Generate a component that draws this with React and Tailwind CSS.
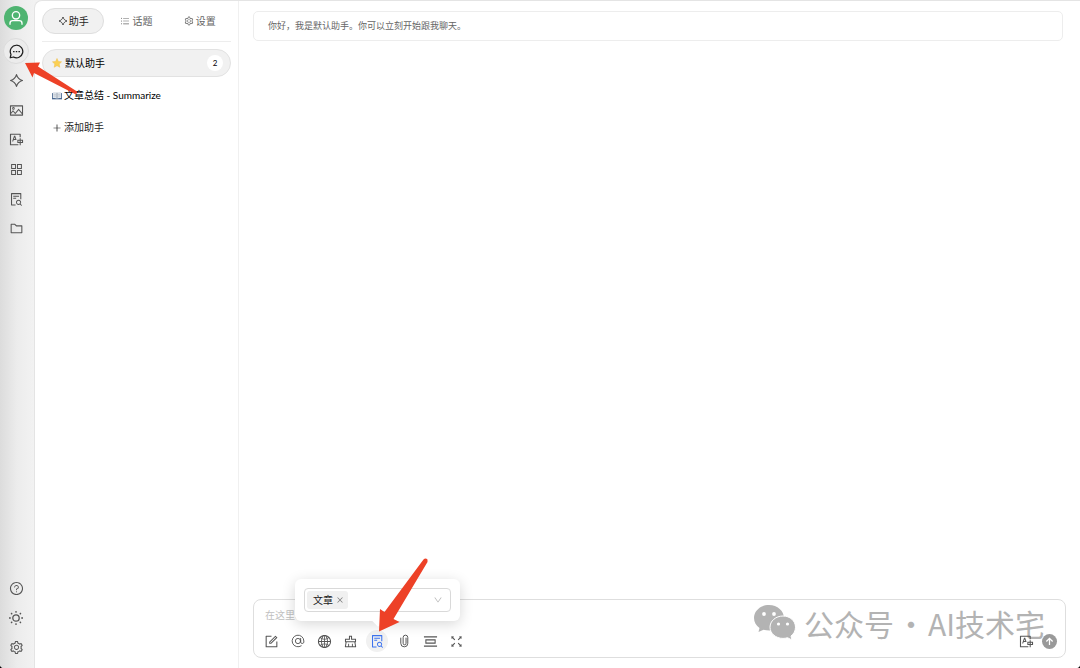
import {
  AiOutlineAppstore,
  AiOutlineClear,
  AiOutlineClose,
  AiOutlineDown,
  AiOutlineFileSearch,
  AiOutlineFolder,
  AiOutlineForm,
  AiOutlineFullscreen,
  AiOutlineGlobal,
  AiOutlinePicCenter,
  AiOutlinePicture,
  AiOutlinePlus,
  AiOutlineQuestionCircle,
  AiOutlineSetting,
  AiOutlineTranslation,
  AiOutlineUnorderedList,
} from "react-icons/ai";

const fontStack = "font-['Lato','Noto_Sans_CJK_SC',sans-serif]";

function Sparkle({ size = 14 }) {
  return (
    <svg width={size} height={size} viewBox="0 0 24 24" fill="none" stroke="currentColor" strokeWidth="1.9" strokeLinejoin="round">
      <path d="M12 2.500C13.500 7.500 16.500 10.500 21.500 12C16.500 13.500 13.500 16.500 12 21.500C10.500 16.500 7.500 13.500 2.500 12C7.500 10.500 10.500 7.500 12 2.500Z" />
    </svg>
  );
}

function ChatIcon() {
  return (
    <svg width="15" height="15" viewBox="0 0 24 24" fill="none" stroke="currentColor" strokeWidth="2" strokeLinejoin="round">
      <path d="M12 2A10 10 0 1 1 7.300 20.800L2 22L3.200 16.700A10 10 0 0 1 12 2Z" />
      <path d="M6.500 12h2.400M10.800 12h2.400M15.100 12h2.400" />
    </svg>
  );
}

function SunIcon() {
  return (
    <svg width="14" height="14" viewBox="0 0 24 24" fill="none" stroke="currentColor" strokeWidth="2.2">
      <circle cx="12" cy="12" r="5.5" />
      <path d="M12 0v3M12 21v3M0 12h3M21 12h3M3.500 3.500l2 2M18.500 18.500l2 2M3.500 20.500l2-2M18.500 5.500l2-2" />
    </svg>
  );
}

function AtIcon() {
  return (
    <svg width="14" height="14" viewBox="0 0 24 24" fill="none" stroke="currentColor" strokeWidth="1.6" strokeLinecap="round">
      <circle cx="12" cy="12" r="4.5" />
      <path d="M16.500 7.500v6.500a2.800 2.800 0 0 0 5.500 0v-2a10 10 0 1 0-4.500 8.400" />
    </svg>
  );
}

function ClipIcon() {
  return (
    <svg width="14" height="14" viewBox="0 0 24 24" fill="none" stroke="currentColor" strokeWidth="1.7" strokeLinecap="round">
      <path d="M15.500 7v9a2.500 2.500 0 0 1-5 0V6a4 4 0 0 1 8 0v10a5.500 5.500 0 0 1-12 0V7" />
    </svg>
  );
}

function Star() {
  return (
    <svg width="10" height="10" viewBox="0 0 24 24">
      <path d="M12 1l3.300 7.300 7.700.9-5.700 5.300 1.500 7.800L12 18.500l-6.800 3.800 1.500-7.800L1 9.200l7.700-.9z" fill="#fbd052" stroke="#eeb83c" />
    </svg>
  );
}

function Book() {
  return (
    <svg width="10" height="10" viewBox="0 0 24 24">
      <path d="M0 5h24v15H0z" fill="#4a6890" />
      <path d="M2 3q6-2 10 1v14q-5-2-10-1zM22 3q-6-2-10 1v14q5-2 10-1z" fill="#dfe5eb" />
      <path d="M12 4v14" stroke="#6d7d90" strokeWidth="1.5" />
      <path d="M4 8h6M4 12h6M14 8h6M14 12h6" stroke="#b3bcc6" strokeWidth="1.5" />
    </svg>
  );
}

const navItems = [
  { label: "智能体", icon: <Sparkle size={15} /> },
  { label: "绘画", icon: <AiOutlinePicture /> },
  { label: "翻译", icon: <AiOutlineTranslation /> },
  { label: "小程序", icon: <AiOutlineAppstore /> },
  { label: "知识库", icon: <AiOutlineFileSearch /> },
  { label: "文件", icon: <AiOutlineFolder /> },
];

const bottomItems = [
  { label: "帮助", icon: <AiOutlineQuestionCircle /> },
  { label: "主题", icon: <SunIcon /> },
  { label: "设置", icon: <AiOutlineSetting /> },
];

const tools = [
  { label: "新话题", icon: <AiOutlineForm /> },
  { label: "提及模型", icon: <AtIcon /> },
  { label: "联网搜索", icon: <AiOutlineGlobal /> },
  { label: "清空", icon: <AiOutlineClear /> },
  { label: "知识库", icon: <AiOutlineFileSearch />, active: true },
  { label: "附件", icon: <ClipIcon /> },
  { label: "清除上下文", icon: <AiOutlinePicCenter /> },
  { label: "展开", icon: <AiOutlineFullscreen /> },
];

function NavButton({ label, icon }) {
  return (
    <button aria-label={label} className="flex h-[26px] w-[26px] items-center justify-center text-[15px] text-[#555]">
      {icon}
    </button>
  );
}

function Sidebar() {
  return (
    <nav className="flex w-[34px] shrink-0 flex-col items-center bg-linear-to-r from-[#dcdcdc] via-[#ececec] to-[#f2f2f2] pt-[6px] pr-[2px] pb-[8px]">
      <button aria-label="用户" className="flex h-[24px] w-[24px] shrink-0 items-center justify-center rounded-full bg-[#4fb471] text-white">
        <svg width="16" height="16" viewBox="0 0 24 24" fill="none" stroke="currentColor" strokeWidth="2">
          <circle cx="12" cy="8" r="5.5" />
          <path d="M3 22v-2q0-4 4-4h10q4 0 4 4v2" />
        </svg>
      </button>
      <div className="mt-[8px] flex h-[204px] flex-col justify-between">
        <button aria-label="聊天" className="flex h-[26px] w-[26px] items-center justify-center rounded-full border border-[#dcdcdc] bg-[#ececec] text-[#1f1f1f]">
          <ChatIcon />
        </button>
        {navItems.map((item) => (
          <NavButton key={item.label} {...item} />
        ))}
      </div>
      <div className="mt-auto flex h-[85px] flex-col justify-between">
        {bottomItems.map((item) => (
          <NavButton key={item.label} {...item} />
        ))}
      </div>
    </nav>
  );
}

function AssistantPanel() {
  return (
    <aside className="w-[204px] shrink-0 border-r border-[#f0f0f0] px-[7px] pt-[7px] text-[10px] text-[#1f1f1f]">
      <div className="grid grid-cols-3 gap-px border-b border-[#ededed] pb-[7px]">
        <button className="flex h-[26px] items-center justify-center gap-px rounded-full border border-[#dedede] bg-[#f1f1f1]">
          <Sparkle size={10} />
          助手
        </button>
        <button className="flex h-[26px] items-center justify-center gap-[2px] text-[#666]">
          <AiOutlineUnorderedList />
          话题
        </button>
        <button className="flex h-[26px] items-center justify-center gap-[2px] text-[#666]">
          <AiOutlineSetting />
          设置
        </button>
      </div>
      <div className="mt-[7px] flex flex-col gap-[5px]">
        <button className="flex h-[28px] items-center gap-[3px] rounded-full border border-[#e2e2e2] bg-[#f1f1f1] pr-[7px] pl-[9px] text-black">
          <Star />
          默认助手
          <span className="ml-auto flex h-[16px] w-[16px] items-center justify-center rounded-full bg-white text-[8px]">2</span>
        </button>
        <button className="flex h-[27px] items-center gap-[2px] px-[10px] text-black">
          <Book />
          文章总结 - Summarize
        </button>
        <button className="flex h-[27px] items-center gap-[2px] px-[10px]">
          <AiOutlinePlus />
          添加助手
        </button>
      </div>
    </aside>
  );
}

function KnowledgePopover() {
  return (
    <div className="absolute bottom-[36px] left-[41px] w-[165px] rounded-[6px] bg-white p-[9px] shadow-[0_3px_14px_rgba(0,0,0,0.16)]">
      <div className="flex h-[24px] items-center rounded-[4px] border border-[#d9d9d9] px-[2px] text-[10px] text-[#222]">
        <span className="flex h-[18px] items-center gap-[3px] rounded-[3px] bg-[#f0f0f0] pr-[4px] pl-[6px]">
          文章
          <button aria-label="移除" className="text-[8px] text-[#777]">
            <AiOutlineClose />
          </button>
        </span>
        <button aria-label="选择知识库" className="mr-[5px] ml-auto text-[10px] text-[#b5b5b5]">
          <AiOutlineDown />
        </button>
      </div>
      <span className="absolute -bottom-[4px] left-[79px] h-[8px] w-[8px] rotate-45 bg-white" />
    </div>
  );
}

function Watermark() {
  return (
    <div className="pointer-events-none absolute right-[20px] bottom-[14px] flex items-center gap-[8px] whitespace-nowrap text-[#b3b3b3]">
      <svg width="42" height="36" viewBox="0 0 42 36">
        <path d="M15 0C6.500 0 0 5.700 0 13c0 4.200 2.200 7.500 5.500 10L4.500 27l5-2.300q2.700.8 6 .8C24 25.500 30 20 30 13S23.500 0 15 0Z" fill="#b3b3b3" />
        <path d="M29 11c-7.200 0-13 5-13 11.200s5.800 11.200 13 11.200q2.300 0 4.500-.7L38 35l-1-4c2.700-2 4.500-5 4.500-8.800C41.500 16 36.200 11 29 11Z" fill="#b3b3b3" stroke="#fff" />
        <g fill="#fff">
          <circle cx="10" cy="9" r="1.9" />
          <circle cx="20" cy="9" r="1.9" />
          <circle cx="24.5" cy="19" r="1.6" />
          <circle cx="33.5" cy="19" r="1.6" />
        </g>
      </svg>
      <span className="flex font-['Noto_Sans_CJK_SC',sans-serif] text-[30px] leading-[40px] font-normal">
        公众号
        <span className="flex w-[34px] justify-center">·</span>
        AI技术宅
      </span>
    </div>
  );
}

function Composer() {
  return (
    <div className="relative mx-[14px] mb-[10px] rounded-[8px] border border-[#dedede]">
      <textarea
        aria-label="消息"
        placeholder="在这里输入消息，按 Enter 发送"
        className="block h-[30px] w-full resize-none px-[11px] pt-[8px] text-[10px] leading-[14px] outline-none placeholder:text-[#bfbfbf]"
      />
      <div className="flex items-center px-[6px] pb-[5px]">
        <div className="flex w-[208px] justify-between">
          {tools.map((tool) => (
            <button
              key={tool.label}
              aria-label={tool.label}
              className={
                tool.active
                  ? "flex h-[22px] w-[22px] items-center justify-center rounded-full bg-[#f1f1f1] text-[15px] text-[#3d73ee]"
                  : "flex h-[22px] w-[22px] items-center justify-center text-[15px] text-[#555]"
              }
            >
              {tool.icon}
            </button>
          ))}
        </div>
        <div className="relative z-10 ml-auto flex items-center gap-[8px] pr-[2px] text-[15px] text-[#555]">
          <button aria-label="翻译">
            <AiOutlineTranslation />
          </button>
          <button aria-label="发送" className="flex h-[15px] w-[15px] items-center justify-center rounded-full bg-[#999] text-white">
            <svg width="9" height="9" viewBox="0 0 10 10" fill="none" stroke="currentColor" strokeWidth="1.4">
              <path d="M5 9V1.500M1.500 5L5 1.500L8.500 5" />
            </svg>
          </button>
        </div>
      </div>
      <Watermark />
      <KnowledgePopover />
      {/* pointer to the knowledge base button */}
      <svg className="pointer-events-none absolute bottom-[25px] left-[124px]" width="52" height="74" viewBox="0 0 52 74">
        <path d="M45.500 1.500Q47.500-.5 49.500 1.500L49.500 4L15.500 61L21.500 64L1 73.500L2 51L6.500 54Z" fill="#ed4127" />
      </svg>
    </div>
  );
}

export default function App() {
  return (
    <div className="bg-black">
      <div className={`relative flex h-screen overflow-hidden rounded-b-[4px] bg-[#f2f2f2] ${fontStack}`}>
        <Sidebar />
        <div className="flex min-w-0 flex-1 rounded-tl-[8px] border-t border-l border-[#e4e4e4] bg-white">
          <AssistantPanel />
          <main className="flex min-w-0 flex-1 flex-col">
            <div className="mt-[10px] mr-[17px] ml-[14px] flex h-[30px] items-center rounded-[5px] border border-[#ededed] px-[14px] text-[9px] text-[#666]">
              你好，我是默认助手。你可以立刻开始跟我聊天。
            </div>
            <div className="flex-1" />
            <Composer />
          </main>
        </div>
        {/* pointer to the chat button */}
        <svg className="pointer-events-none absolute top-[62px] left-[25px]" width="54" height="34" viewBox="0 0 54 34">
          <path d="M0 1L15 .5L13 4.500L52 29.500Q53 32 50 32L9 11L7.500 15.500Z" fill="#ed4127" />
        </svg>
      </div>
    </div>
  );
}
